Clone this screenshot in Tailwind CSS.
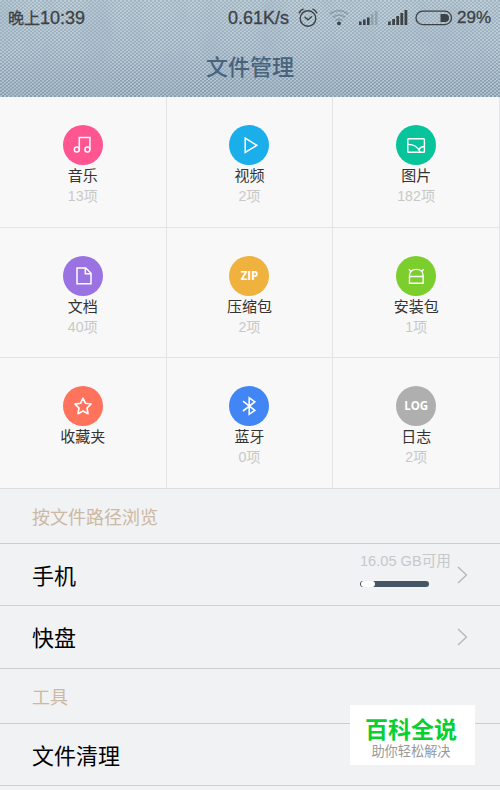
<!DOCTYPE html>
<html lang="zh-CN">
<head>
  <meta charset="UTF-8" />
  <title>文件管理</title>
  <meta name="viewport" content="width=device-width, initial-scale=1.0" />
  <script src="https://cdn.jsdelivr.net/npm/@tailwindcss/browser@4"></script>
</head>
<body class="w-[500px] h-[790px] overflow-hidden bg-[#f0f2f4] font-['Liberation_Sans','Noto_Sans_CJK_SC',sans-serif]">

  <!-- Header -->
  <header class="relative h-[97px] overflow-hidden bg-linear-to-b from-[#a9bbc7] via-[#9fb2c1] to-[#889eb1]">
    <!-- Denim texture -->
    <svg class="absolute inset-0" width="500" height="97">
      <defs>
        <pattern id="weave" width="4" height="3.4" patternUnits="userSpaceOnUse">
          <ellipse cx="1" cy=".85" rx="1" ry=".75" transform="rotate(-35 1 .85)" fill="#dbe9f0" fill-opacity=".7" />
          <ellipse cx="3" cy="2.55" rx="1" ry=".75" transform="rotate(-35 3 2.55)" fill="#dbe9f0" fill-opacity=".7" />
          <circle cx="3" cy=".85" r=".6" fill="#5c7488" fill-opacity=".4" />
          <circle cx="1" cy="2.55" r=".6" fill="#5c7488" fill-opacity=".4" />
        </pattern>
        <filter id="cloud" x="0" y="0" width="100%" height="100%">
          <feTurbulence type="fractalNoise" baseFrequency=".035 .02" numOctaves="3" seed="4" />
          <feColorMatrix values="0 0 0 0 .35  0 0 0 0 .45  0 0 0 0 .55  1.1 0 0 0 -.45" />
        </filter>
      </defs>
      <rect width="500" height="97" fill="url(#weave)" />
      <rect width="500" height="97" filter="url(#cloud)" />
    </svg>

    <!-- Status bar -->
    <div class="relative flex h-9 items-center pl-2 text-[#3c4246] [-webkit-text-stroke:0.3px_#3c4246]">
      <span class="w-[220px] whitespace-nowrap text-[18px]"><span class="text-[16px]">晚上</span>10:39</span>
      <span class="w-[70px] text-[18px]">0.61K/s</span>
      <svg class="w-5 h-5 shrink-0 -mt-px" viewBox="0 0 20 20" fill="none" stroke="currentColor" stroke-width="1.4" stroke-linecap="round">
        <circle cx="10" cy="10.5" r="7.8" />
        <path d="M7 9.2L10 11.8L13.5 8.8M1.2 4.8Q2.6 2.2 5.2 1.2M18.8 4.8Q17.4 2.2 14.8 1.2" />
      </svg>
      <svg class="ml-2.5 w-[22px] h-5 shrink-0" viewBox="0 0 22 20" fill="none" stroke="#6f8290" stroke-opacity=".6" stroke-width="1.7">
        <path d="M2 6Q11 -1 20 6M4.8 9.4Q11 4.6 17.2 9.4M7.6 12.6Q11 10 14.4 12.6" />
        <circle cx="11" cy="15.4" r="1.9" fill="#3c4246" stroke="none" />
      </svg>
      <svg class="ml-2 w-5 h-5 shrink-0" viewBox="0 0 20 20" fill="currentColor">
        <path d="M1 13.5h2.6v3.5H1zM5 11.5h2.6V17H5zM9 9.5h2.6V17H9z" />
        <path d="M13 6h2.4v11H13zM17 3h2.4v14H17z" fill="#7e909c" fill-opacity=".6" />
      </svg>
      <svg class="ml-[9px] w-[21px] h-5 shrink-0" viewBox="0 0 21 20" fill="currentColor">
        <path d="M1 13.5h2.8V17H1zM5.2 11H8v6H5.2zM9.3 8h2.8v9H9.3zM13.4 5h2.8v12h-2.8zM17.5 2h2.8v15h-2.8z" />
      </svg>
      <svg class="ml-[7px] w-[38px] h-5 shrink-0 -mt-px" viewBox="0 0 38 20">
        <rect x="1" y="3.2" width="35.5" height="13.4" rx="6.7" fill="none" stroke="currentColor" stroke-width="1.3" />
        <path d="M25.5 5.9h4.5a4 4 0 0 1 0 8h-4.5z" fill="currentColor" />
      </svg>
      <span class="ml-1 text-[17px]">29%</span>
    </div>
    <h1 class="relative text-center text-[22px] leading-[63px] font-medium text-[#4a637c]">文件管理</h1>
  </header>

  <!-- Categories -->
  <main class="grid h-[392px] grid-cols-3 grid-rows-[131px_130px_130px] border-b border-[#dcdddf] bg-[#f8f8f8] text-center text-[15px] text-[#333]">
    <div class="flex flex-col items-center border-r border-b border-[#e4e4e6] pt-7">
      <svg class="w-10 h-10 shrink-0" viewBox="0 0 40 40" fill="none" stroke="#fff" stroke-width="1.5">
        <circle cx="20" cy="20" r="20" fill="#ff5591" stroke="none" />
        <circle cx="13.8" cy="24.4" r="2.5" /><circle cx="24.4" cy="24.4" r="2.5" />
        <path d="M16.3 24.4V12.4H26.9V24.4" />
      </svg>
      <p class="leading-[22px]">音乐</p>
      <p class="text-[14.2px] leading-[18px] text-[#c8c8c8]">13项</p>
    </div>
    <div class="flex flex-col items-center border-r border-b border-[#e4e4e6] pt-7">
      <svg class="w-10 h-10 shrink-0" viewBox="0 0 40 40" fill="none" stroke="#fff" stroke-width="1.5">
        <circle cx="20" cy="20" r="20" fill="#1aaeeb" stroke="none" />
        <path d="M16.2 13.2L27.8 20.3L16.2 27.4Z" />
      </svg>
      <p class="leading-[22px]">视频</p>
      <p class="text-[14.2px] leading-[18px] text-[#c8c8c8]">2项</p>
    </div>
    <div class="flex flex-col items-center border-r border-b border-[#e4e4e6] pt-7">
      <svg class="w-10 h-10 shrink-0" viewBox="0 0 40 40" fill="none" stroke="#fff" stroke-width="1.4">
        <circle cx="20" cy="20" r="20" fill="#07c49a" stroke="none" />
        <rect x="11.8" y="13.7" width="16.6" height="13.5" rx=".8" />
        <path d="M11.8 19.4C17 19.2 21.5 21.5 24.2 27M22.8 24.6C24 22.4 25.8 21.5 28.4 21.5" />
      </svg>
      <p class="leading-[22px]">图片</p>
      <p class="text-[14.2px] leading-[18px] text-[#c8c8c8]">182项</p>
    </div>

    <div class="flex flex-col items-center border-r border-b border-[#e4e4e6] pt-[27.5px]">
      <svg class="w-10 h-10 shrink-0" viewBox="0 0 40 40" fill="none" stroke="#fff" stroke-width="1.5">
        <circle cx="20" cy="20" r="20" fill="#9b72e2" stroke="none" />
        <path d="M14 12H22.8L28 17.2V27.7H14ZM22.3 12.3V17.7H27.8" />
      </svg>
      <p class="leading-[22px]">文档</p>
      <p class="text-[14.2px] leading-[18px] text-[#c8c8c8]">40项</p>
    </div>
    <div class="flex flex-col items-center border-r border-b border-[#e4e4e6] pt-[27.5px]">
      <div class="w-10 h-10 shrink-0 rounded-full bg-[#efb23e] font-['Open_Sans'] text-[11.5px] leading-10 font-bold text-white">ZIP</div>
      <p class="leading-[22px]">压缩包</p>
      <p class="text-[14.2px] leading-[18px] text-[#c8c8c8]">2项</p>
    </div>
    <div class="flex flex-col items-center border-r border-b border-[#e4e4e6] pt-[27.5px]">
      <svg class="w-10 h-10 shrink-0" viewBox="0 0 40 40" fill="none" stroke="#fff" stroke-width="1.4">
        <circle cx="20" cy="20" r="20" fill="#7bce2c" stroke="none" />
        <path d="M13.5 27.2V19.3C13.5 15.4 16.6 13.4 20.3 13.4S27.1 15.4 27.1 19.3V27.2ZM13.5 20.5H27.1M13 13.3L15.3 16M27.6 13.3L25.3 16" />
      </svg>
      <p class="leading-[22px]">安装包</p>
      <p class="text-[14.2px] leading-[18px] text-[#c8c8c8]">1项</p>
    </div>

    <div class="flex flex-col items-center border-r border-[#e4e4e6] pt-7">
      <svg class="w-10 h-10 shrink-0" viewBox="0 0 40 40" fill="none" stroke="#fff" stroke-width="1.6" stroke-linejoin="round">
        <circle cx="20" cy="20" r="20" fill="#ff725c" stroke="none" />
        <path d="M20 12.2L22.5 17.3L28 18.1L24 22L25 27.7L20 25L15 27.7L16 22L12 18.1L17.5 17.3Z" />
      </svg>
      <p class="leading-[22px]">收藏夹</p>
    </div>
    <div class="flex flex-col items-center border-r border-[#e4e4e6] pt-7">
      <svg class="w-10 h-10 shrink-0" viewBox="0 0 40 40" fill="none" stroke="#fff" stroke-width="1.6">
        <circle cx="20" cy="20" r="20" fill="#4285f4" stroke="none" />
        <path d="M14 15.2L25.8 24.4L20.2 28.3V11.9L25.8 15.8L14 25" />
      </svg>
      <p class="leading-[22px]">蓝牙</p>
      <p class="text-[14.2px] leading-[18px] text-[#c8c8c8]">0项</p>
    </div>
    <div class="flex flex-col items-center border-r border-[#e4e4e6] pt-7">
      <div class="w-10 h-10 shrink-0 rounded-full bg-[#afafaf] font-['Open_Sans'] text-[11.5px] leading-10 font-bold text-white">LOG</div>
      <p class="leading-[22px]">日志</p>
      <p class="text-[14.2px] leading-[18px] text-[#c8c8c8]">2项</p>
    </div>
  </main>

  <!-- File list -->
  <section class="text-[22px] text-black">
    <h2 class="h-[55px] border-b border-[#cbcdcf] pl-8 text-[18px] leading-[58px] text-[#cdb8a3]">按文件路径浏览</h2>
    <div class="flex h-[62px] items-center border-b border-[#cfd1d3] pr-8 pl-8">
      <span class="grow pt-1">手机</span>
      <div class="mr-[5px] mb-3 w-[92px]">
        <p class="text-[14.6px] leading-5 whitespace-nowrap text-[#c6c8ca]">16.05 GB可用</p>
        <div class="mt-2.5 h-1.5 w-[69px] rounded-full bg-[#465666] px-px">
          <div class="h-1.5 w-[14px] rounded-full bg-white"></div>
        </div>
      </div>
      <svg class="w-[11px] h-[18px]" viewBox="0 0 11 18" fill="none" stroke="#b4b6b9" stroke-width="1.3">
        <path d="M1 1L9.5 9L1 17" />
      </svg>
    </div>
    <div class="flex h-[63px] items-center border-b border-[#cbcdcf] pr-8 pl-8">
      <span class="grow pt-0.5">快盘</span>
      <svg class="w-[11px] h-[18px]" viewBox="0 0 11 18" fill="none" stroke="#b4b6b9" stroke-width="1.3">
        <path d="M1 1L9.5 9L1 17" />
      </svg>
    </div>
    <h2 class="h-[55px] border-b border-[#cbcdcf] pl-8 text-[18px] leading-[58px] text-[#cdb8a3]">工具</h2>
    <div class="flex h-[62px] items-center border-b border-[#cfd1d3] pt-1 pl-8">文件清理</div>
  </section>

  <!-- Watermark -->
  <div class="absolute top-[705px] left-[350px] h-[60px] w-[125px] bg-white pt-3 text-center">
    <p class="pr-[3px] text-[23px] leading-[26px] font-bold text-[#08d032]">百科全说</p>
    <p class="pr-[3px] text-[13.2px] leading-[17px] text-[#999]">助你轻松解决</p>
  </div>
</body>
</html>
